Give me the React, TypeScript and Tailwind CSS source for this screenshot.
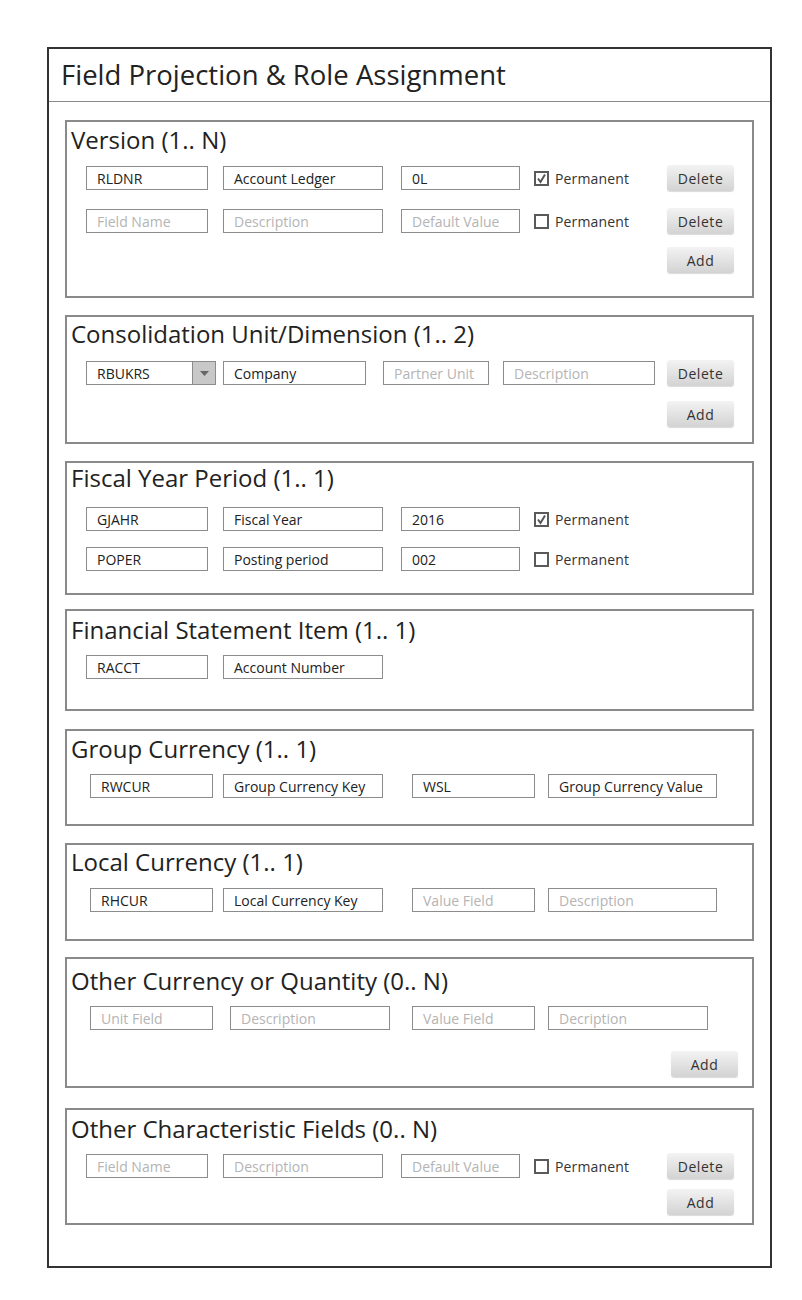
import type { ReactNode } from 'react';

function Field({ w, ph, children }: { w: string; ph?: string; children?: ReactNode }) {
  return (
    <div className={`${w} h-6 shrink-0 border border-[#8c8c8c] bg-white pl-[10px] flex items-center text-[14px] whitespace-nowrap overflow-hidden`}>
      {children ? <span className="text-[#222]">{children}</span> : <span className="text-[#b4b4b4]">{ph}</span>}
    </div>
  );
}

function Select({ value }: { value: string }) {
  return (
    <div className="w-[130px] h-6 shrink-0 border border-[#8c8c8c] bg-white flex text-[14px]">
      <div className="flex-1 pl-[10px] flex items-center text-[#222]">{value}</div>
      <div className="w-[23px] bg-[#c8c8c8] border-l border-[#8c8c8c] flex items-center justify-center">
        <svg width="9" height="5" viewBox="0 0 9 5">
          <polygon points="0,0 9,0 4.5,5" fill="#666" />
        </svg>
      </div>
    </div>
  );
}

function Check({ checked }: { checked?: boolean }) {
  return (
    <div className="flex items-center shrink-0 ml-[14px]">
      <div className="w-[15px] h-[15px] border-2 border-[#5a5a5a] bg-white flex items-center justify-center">
        {checked && (
          <svg width="11" height="11" viewBox="0 0 11 11">
            <polyline points="2,5.5 4.5,9 9,1.5" fill="none" stroke="#555" strokeWidth="2" />
          </svg>
        )}
      </div>
      <span className="ml-[6px] text-[14px] text-[#333] tracking-[0.01em]">Permanent</span>
    </div>
  );
}

function Btn({ label }: { label: string }) {
  return (
    <div className="w-[67px] h-[26px] shrink-0 rounded-[3px] bg-gradient-to-b from-[#f3f3f3] to-[#d3d3d3] shadow-[0_1px_1px_rgba(0,0,0,0.15)] flex items-center justify-center text-[14px] text-[#333] tracking-[0.04em]">
      {label}
    </div>
  );
}

function Section({ h, title, tmt, children, mt }: { h: string; title: string; tmt: string; mt: string; children: ReactNode }) {
  return (
    <div className={`${h} ${mt} mx-[16px] border-2 border-[#8a8a8a] flex flex-col`}>
      <div className={`${tmt} h-[30px] leading-[30px] pl-[4px] text-[24px] text-[#222]`}>{title}</div>
      {children}
    </div>
  );
}

export default function App() {
  return (
    <div className="w-[802px] h-[1300px] bg-white pt-[47px] pl-[47px] font-['Open_Sans',sans-serif]">
      <div className="w-[725px] h-[1221px] border-2 border-[#333]">
        <div className="h-[53px] pl-[12px] flex items-center text-[27.5px] text-[#222] border-b border-[#8a8a8a]">
          Field Projection &amp; Role Assignment
        </div>

        {/* Version */}
        <Section h="h-[178px]" mt="mt-[18px]" tmt="mt-[3px]" title="Version (1.. N)">
          <div className="mt-[10px] h-[26px] flex items-center pl-[19px] pr-[18px]">
            <Field w="w-[122px]">RLDNR</Field>
            <div className="ml-[15px]"><Field w="w-[160px]">Account Ledger</Field></div>
            <div className="ml-[18px]"><Field w="w-[119px]">0L</Field></div>
            <Check checked />
            <div className="ml-auto"><Btn label="Delete" /></div>
          </div>
          <div className="mt-[17px] h-[26px] flex items-center pl-[19px] pr-[18px]">
            <Field w="w-[122px]" ph="Field Name" />
            <div className="ml-[15px]"><Field w="w-[160px]" ph="Description" /></div>
            <div className="ml-[18px]"><Field w="w-[119px]" ph="Default Value" /></div>
            <Check />
            <div className="ml-auto"><Btn label="Delete" /></div>
          </div>
          <div className="mt-[13px] h-[26px] flex justify-end pr-[18px]">
            <Btn label="Add" />
          </div>
        </Section>

        {/* Consolidation */}
        <Section h="h-[129px]" mt="mt-[17px]" tmt="mt-[2px]" title="Consolidation Unit/Dimension (1.. 2)">
          <div className="mt-[11px] h-[26px] flex items-center pl-[19px] pr-[18px]">
            <Select value="RBUKRS" />
            <div className="ml-[7px]"><Field w="w-[143px]">Company</Field></div>
            <div className="ml-[17px]"><Field w="w-[106px]" ph="Partner Unit" /></div>
            <div className="ml-[14px]"><Field w="w-[152px]" ph="Description" /></div>
            <div className="ml-auto"><Btn label="Delete" /></div>
          </div>
          <div className="mt-[15px] h-[26px] flex justify-end pr-[18px]">
            <Btn label="Add" />
          </div>
        </Section>

        {/* Fiscal Year */}
        <Section h="h-[134px]" mt="mt-[17px]" tmt="mt-0" title="Fiscal Year Period (1.. 1)">
          <div className="mt-[13px] h-[26px] flex items-center pl-[19px]">
            <Field w="w-[122px]">GJAHR</Field>
            <div className="ml-[15px]"><Field w="w-[160px]">Fiscal Year</Field></div>
            <div className="ml-[18px]"><Field w="w-[119px]">2016</Field></div>
            <Check checked />
          </div>
          <div className="mt-[14px] h-[26px] flex items-center pl-[19px]">
            <Field w="w-[122px]">POPER</Field>
            <div className="ml-[15px]"><Field w="w-[160px]">Posting period</Field></div>
            <div className="ml-[18px]"><Field w="w-[119px]">002</Field></div>
            <Check />
          </div>
        </Section>

        {/* Financial Statement Item */}
        <Section h="h-[102px]" mt="mt-[14px]" tmt="mt-[4px]" title="Financial Statement Item (1.. 1)">
          <div className="mt-[9px] h-[26px] flex items-center pl-[19px]">
            <Field w="w-[122px]">RACCT</Field>
            <div className="ml-[15px]"><Field w="w-[160px]">Account Number</Field></div>
          </div>
        </Section>

        {/* Group Currency */}
        <Section h="h-[97px]" mt="mt-[18px]" tmt="mt-[3px]" title="Group Currency (1.. 1)">
          <div className="mt-[9px] h-[26px] flex items-center pl-[23px]">
            <Field w="w-[123px]">RWCUR</Field>
            <div className="ml-[10px]"><Field w="w-[160px]">Group Currency Key</Field></div>
            <div className="ml-[29px]"><Field w="w-[123px]">WSL</Field></div>
            <div className="ml-[13px]"><Field w="w-[169px]">Group Currency Value</Field></div>
          </div>
        </Section>

        {/* Local Currency */}
        <Section h="h-[98px]" mt="mt-[17px]" tmt="mt-[2px]" title="Local Currency (1.. 1)">
          <div className="mt-[10px] h-[26px] flex items-center pl-[23px]">
            <Field w="w-[123px]">RHCUR</Field>
            <div className="ml-[10px]"><Field w="w-[160px]">Local Currency Key</Field></div>
            <div className="ml-[29px]"><Field w="w-[123px]" ph="Value Field" /></div>
            <div className="ml-[13px]"><Field w="w-[169px]" ph="Description" /></div>
          </div>
        </Section>

        {/* Other Currency */}
        <Section h="h-[131px]" mt="mt-[16px]" tmt="mt-[7px]" title="Other Currency or Quantity (0.. N)">
          <div className="mt-[9px] h-[26px] flex items-center pl-[23px]">
            <Field w="w-[123px]" ph="Unit Field" />
            <div className="ml-[17px]"><Field w="w-[160px]" ph="Description" /></div>
            <div className="ml-[22px]"><Field w="w-[123px]" ph="Value Field" /></div>
            <div className="ml-[13px]"><Field w="w-[160px]" ph="Decription" /></div>
          </div>
          <div className="mt-[20px] h-[26px] flex justify-end pr-[14px]">
            <Btn label="Add" />
          </div>
        </Section>

        {/* Other Characteristic Fields */}
        <Section h="h-[117px]" mt="mt-[20px]" tmt="mt-[4px]" title="Other Characteristic Fields (0.. N)">
          <div className="mt-[9px] h-[26px] flex items-center pl-[19px] pr-[18px]">
            <Field w="w-[122px]" ph="Field Name" />
            <div className="ml-[15px]"><Field w="w-[160px]" ph="Description" /></div>
            <div className="ml-[18px]"><Field w="w-[119px]" ph="Default Value" /></div>
            <Check />
            <div className="ml-auto"><Btn label="Delete" /></div>
          </div>
          <div className="mt-[10px] h-[26px] flex justify-end pr-[18px]">
            <Btn label="Add" />
          </div>
        </Section>
      </div>
    </div>
  );
}
